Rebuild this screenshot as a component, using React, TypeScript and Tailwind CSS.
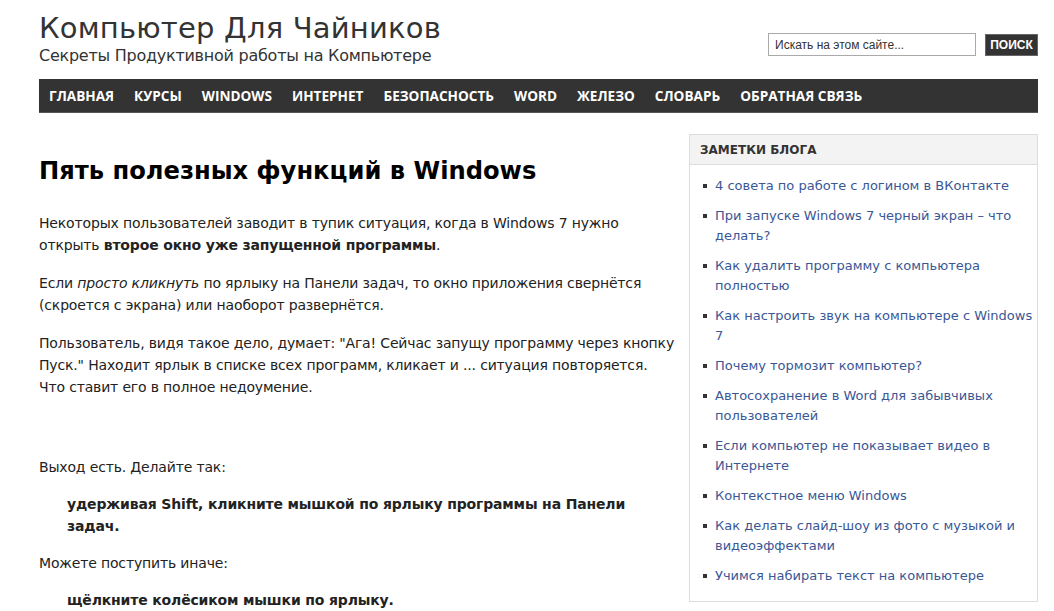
export default function App() {
  const nav = [
    "ГЛАВНАЯ",
    "КУРСЫ",
    "WINDOWS",
    "ИНТЕРНЕТ",
    "БЕЗОПАСНОСТЬ",
    "WORD",
    "ЖЕЛЕЗО",
    "СЛОВАРЬ",
    "ОБРАТНАЯ СВЯЗЬ",
  ];

  const notes = [
    "4 совета по работе с логином в ВКонтакте",
    "При запуске Windows 7 черный экран – что делать?",
    "Как удалить программу с компьютера полностью",
    "Как настроить звук на компьютере с Windows 7",
    "Почему тормозит компьютер?",
    "Автосохранение в Word для забывчивых пользователей",
    "Если компьютер не показывает видео в Интернете",
    "Контекстное меню Windows",
    "Как делать слайд-шоу из фото с музыкой и видеоэффектами",
    "Учимся набирать текст на компьютере",
  ];

  return (
    <div className="min-h-[611px] bg-white font-['DejaVu_Sans',Verdana,sans-serif] text-[#222]">
      <div className="ml-[39px] w-[999px]">
        {/* Header */}
        <header className="flex items-start justify-between pt-[10px]">
          <div>
            <h1 className="text-[29px] leading-[36px] text-[#333] tracking-[0.2px]">
              Компьютер Для Чайников
            </h1>
            <p className="text-[16px] leading-[19px] text-[#333] tracking-[-0.25px]">
              Секреты Продуктивной работы на Компьютере
            </p>
          </div>
          <div className="mt-[23px] flex items-center gap-[9px]">
            <input
              className="h-[23px] w-[208px] border border-[#aaa] px-[6px] font-['Liberation_Sans',Arial,sans-serif] text-[12px] text-[#333] placeholder:text-[#333] outline-none"
              placeholder="Искать на этом сайте..."
            />
            <button className="h-[22px] w-[53px] border border-[#666] bg-[#333] font-['Liberation_Sans',Arial,sans-serif] text-[12px] font-bold text-white">
              ПОИСК
            </button>
          </div>
        </header>

        {/* Navigation */}
        <nav className="mt-[14px] flex h-[34px] items-center border-b border-[#555] bg-[#333] pl-[10px] pt-[1px]">
          {nav.map((item) => (
            <a
              key={item}
              className="mr-[20px] font-['Open_Sans',sans-serif] text-[13.6px] font-bold text-white"
            >
              {item}
            </a>
          ))}
        </nav>

        <div className="flex justify-between">
          {/* Main article */}
          <main className="w-[638px] pt-[42px] text-[14px] leading-[22px] tracking-[-0.16px]">
            <h2 className="mb-[25px] text-[24.2px] font-bold leading-[32px] tracking-normal text-black">
              Пять полезных функций в Windows
            </h2>
            <p className="mb-[16px]">
              Некоторых пользователей заводит в тупик ситуация, когда в Windows
              7 нужно открыть <b>второе окно уже запущенной программы</b>.
            </p>
            <p className="mb-[16px]">
              Если <i>просто кликнуть</i> по ярлыку на Панели задач, то окно
              приложения свернётся (скроется с экрана) или наоборот развернётся.
            </p>
            <p className="mb-[15px]">
              Пользователь, видя такое дело, думает: "Ага! Сейчас запущу
              программу через кнопку Пуск." Находит ярлык в списке всех
              программ, кликает и ... ситуация повторяется. Что ставит его в
              полное недоумение.
            </p>
            <div className="h-[43px]" />
            <p className="mb-[15px]">Выход есть. Делайте так:</p>
            <p className="mb-[15px] pl-[28px] font-bold">
              удерживая Shift, кликните мышкой по ярлыку программы на Панели
              задач.
            </p>
            <p className="mb-[15px]">Можете поступить иначе:</p>
            <p className="mb-[15px] pl-[28px] font-bold">
              щёлкните колёсиком мышки по ярлыку.
            </p>
          </main>

          {/* Sidebar */}
          <aside className="mt-[21px] w-[349px] self-start border border-[#ddd]">
            <div className="flex h-[30px] items-center border-b border-[#ddd] bg-[#f3f3f3] pl-[10px] text-[12px] font-bold text-[#333]">
              ЗАМЕТКИ БЛОГА
            </div>
            <ul className="pt-[11px] pb-[5px] pl-[13px] pr-[4px]">
              {notes.map((n) => (
                <li key={n} className="mb-[10px] flex">
                  <span className="mt-[8px] mr-[8px] h-[4px] w-[4px] shrink-0 bg-[#333]" />
                  <a className="text-[13px] leading-[20px] text-[#3a5795]">
                    {n}
                  </a>
                </li>
              ))}
            </ul>
          </aside>
        </div>
      </div>
    </div>
  );
}
